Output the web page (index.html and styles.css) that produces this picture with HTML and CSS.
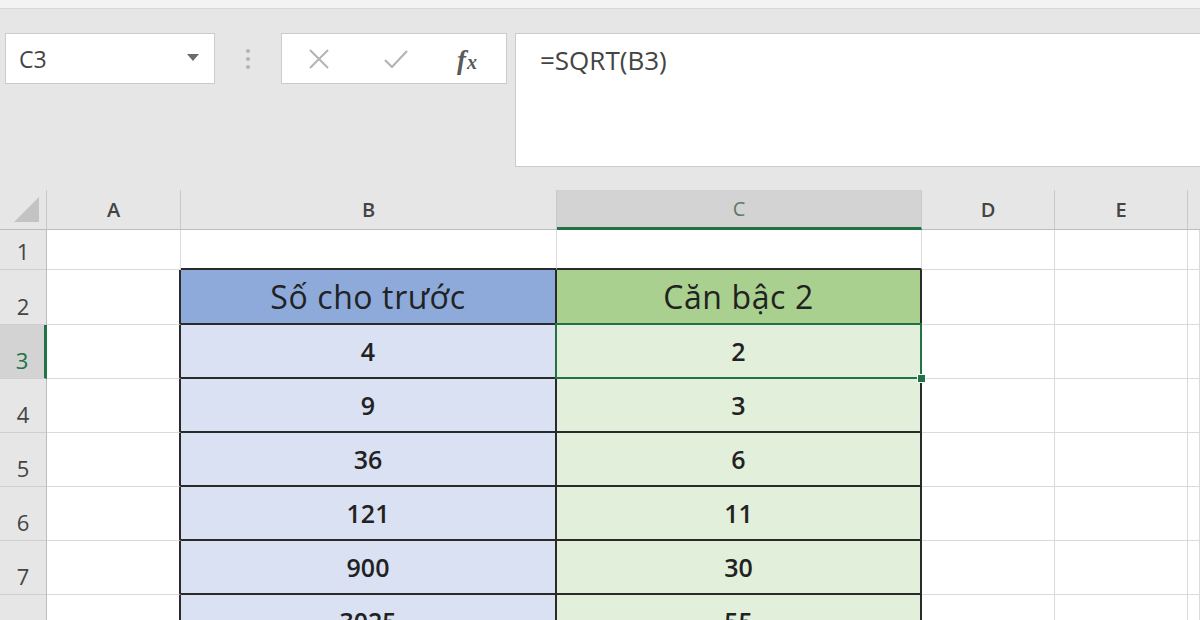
FILE: index.html
```html
<!DOCTYPE html>
<html>
    <head>
        <meta charset="UTF-8" />
        <link rel="stylesheet" href="styles.css">
    </head>
    <body>
        <div class="titlebar"></div>

        <div class="toolbar">
            <div class="namebox">
                <span>C3</span>
                <span class="arrow"></span>
            </div>
            <div class="dots"><span></span><span></span><span></span></div>
            <div class="fxbox">
                <svg class="ico-x" width="22" height="22" viewBox="0 0 22 22">
                    <path d="M2 2 L20 20 M20 2 L2 20" stroke="#b4b4b4" stroke-width="2" fill="none"/>
                </svg>
                <svg class="ico-ok" width="26" height="22" viewBox="0 0 26 22">
                    <path d="M2 12 L9 19 L24 3" stroke="#b4b4b4" stroke-width="2.2" fill="none"/>
                </svg>
                <span class="ico-fx"><span class="f">f</span>x</span>
            </div>
            <div class="formula">=SQRT(B3)</div>
        </div>

        <div class="sheet">
            <!-- header row -->
            <div class="ch corner"><span class="tri"></span></div>
            <div class="ch">A</div>
            <div class="ch">B</div>
            <div class="ch active">C</div>
            <div class="ch">D</div>
            <div class="ch">E</div>
            <div class="ch last"></div>

            <!-- row 1 -->
            <div class="rh">1</div>
            <div class="cell"></div>
            <div class="cell top-edge"></div>
            <div class="cell top-edge"></div>
            <div class="cell"></div>
            <div class="cell"></div>
            <div class="cell"></div>

            <!-- row 2 -->
            <div class="rh">2</div>
            <div class="cell left-edge"></div>
            <div class="cell tbl head-b">Số cho trước</div>
            <div class="cell tbl head-c">Căn bậc 2</div>
            <div class="cell"></div>
            <div class="cell"></div>
            <div class="cell"></div>

            <!-- row 3 -->
            <div class="rh active">3</div>
            <div class="cell left-edge"></div>
            <div class="cell tbl val-b">4</div>
            <div class="cell tbl val-c sel">2</div>
            <div class="cell"></div>
            <div class="cell"></div>
            <div class="cell"></div>

            <div class="rh">4</div>
            <div class="cell left-edge"></div>
            <div class="cell tbl val-b">9</div>
            <div class="cell tbl val-c">3</div>
            <div class="cell"></div>
            <div class="cell"></div>
            <div class="cell"></div>

            <div class="rh">5</div>
            <div class="cell left-edge"></div>
            <div class="cell tbl val-b">36</div>
            <div class="cell tbl val-c">6</div>
            <div class="cell"></div>
            <div class="cell"></div>
            <div class="cell"></div>

            <div class="rh">6</div>
            <div class="cell left-edge"></div>
            <div class="cell tbl val-b">121</div>
            <div class="cell tbl val-c">11</div>
            <div class="cell"></div>
            <div class="cell"></div>
            <div class="cell"></div>

            <div class="rh">7</div>
            <div class="cell left-edge"></div>
            <div class="cell tbl val-b">900</div>
            <div class="cell tbl val-c">30</div>
            <div class="cell"></div>
            <div class="cell"></div>
            <div class="cell"></div>

            <div class="rh">8</div>
            <div class="cell left-edge"></div>
            <div class="cell tbl val-b">3025</div>
            <div class="cell tbl val-c">55</div>
            <div class="cell"></div>
            <div class="cell"></div>
            <div class="cell"></div>
        </div>
    </body>
</html>
```

FILE: styles.css
```css
body {
    margin: 0;
    background: #fff;
    font-family: "Open Sans", "Noto Sans", "Liberation Sans", sans-serif;
    overflow: hidden;
}

.titlebar {
    height: 8px;
    background: #f3f3f3;
    border-bottom: 1px solid #d6d6d6;
}

.toolbar {
    height: 181px;
    box-sizing: border-box;
    background: #e6e6e6;
    display: flex;
    align-items: flex-start;
    padding: 24px 0 0 5px;
}

.namebox {
    width: 210px;
    height: 51px;
    box-sizing: border-box;
    background: #fff;
    border: 1px solid #cbcbcb;
    display: flex;
    align-items: center;
    justify-content: space-between;
    padding: 0 15px 0 13px;
    font-size: 23px;
    color: #444;
}

.arrow {
    width: 0;
    height: 0;
    border-left: 6px solid transparent;
    border-right: 6px solid transparent;
    border-top: 7px solid #6a6a6a;
    margin-top: -3px;
}

.dots {
    width: 66px;
    height: 51px;
    display: flex;
    flex-direction: column;
    align-items: center;
    justify-content: center;
    gap: 4px;
}

.dots span {
    width: 4px;
    height: 4px;
    border-radius: 50%;
    background: #b3b3b3;
}

.fxbox {
    width: 226px;
    height: 51px;
    box-sizing: border-box;
    background: #fff;
    border: 1px solid #cbcbcb;
    display: flex;
    align-items: center;
    padding: 0 0 0 26px;
}

.ico-x {
    margin-right: 53px;
}

.ico-ok {
    margin-right: 48px;
}

.ico-fx {
    font-family: "Liberation Serif", "DejaVu Serif", serif;
    font-style: italic;
    font-weight: bold;
    font-size: 20px;
    color: #5a5a5a;
    margin-top: 4px;
}

.ico-fx .f {
    font-size: 27px;
    margin-right: 1px;
}

.formula {
    flex: 1;
    margin-left: 8px;
    height: 134px;
    box-sizing: border-box;
    background: #fff;
    border: 1px solid #cbcbcb;
    border-right: none;
    padding: 8px 24px;
    font-size: 26px;
    color: #444;
}

.sheet {
    display: grid;
    grid-template-columns: 47px 134px 376px 365px 133px 133px 1fr;
    grid-template-rows: 40px 40px 55px repeat(6, 54px);
}

.ch {
    background: #e6e6e6;
    border-right: 1px solid #c9c9c9;
    border-bottom: 1px solid #bcbcbc;
    box-sizing: border-box;
    display: flex;
    align-items: center;
    justify-content: center;
    font-size: 20px;
    font-weight: 600;
    color: #444;
}

.ch.active {
    background: #d3d3d3;
    color: #5b7b68;
    font-weight: normal;
    border-bottom: 3px solid #217346;
}

.ch.last {
    border-right: none;
}

.corner {
    align-items: flex-end;
    justify-content: flex-end;
    padding: 0 7px 7px 0;
}

.tri {
    width: 0;
    height: 0;
    border-left: 25px solid transparent;
    border-bottom: 25px solid #c3c3c3;
}

.rh {
    background: #e6e6e6;
    border-right: 1px solid #bcbcbc;
    border-bottom: 1px solid #cfcfcf;
    box-sizing: border-box;
    display: flex;
    align-items: flex-end;
    justify-content: center;
    padding-bottom: 3px;
    font-size: 22px;
    color: #444;
}

.rh.active {
    background: #d3d3d3;
    color: #217346;
    border-right: 3px solid #217346;
}

.cell {
    border-right: 1px solid #dadada;
    border-bottom: 1px solid #dadada;
    box-sizing: border-box;
    display: flex;
    align-items: center;
    justify-content: center;
    color: #222;
}

.top-edge {
    border-bottom: 2px solid #2a2a2a;
}

.left-edge {
    border-right: 2px solid #2a2a2a;
}

.tbl {
    border-right: 2px solid #2a2a2a;
    border-bottom: 2px solid #2a2a2a;
}

.head-b {
    background: #8eaadb;
    font-size: 32px;
    letter-spacing: 0.6px;
}

.head-c {
    background: #a9d08e;
    font-size: 32px;
    letter-spacing: 0.6px;
}

.val-b {
    background: #d9e1f2;
    font-size: 25px;
    font-weight: 600;
}

.val-c {
    background: #e2efda;
    font-size: 25px;
    font-weight: 600;
}

.sel {
    position: relative;
}

.sel::after {
    content: "";
    position: absolute;
    left: -2px;
    top: -2px;
    right: -2px;
    bottom: -2px;
    border: 2px solid #217346;
}

.sel::before {
    content: "";
    position: absolute;
    right: -6px;
    bottom: -6px;
    width: 7px;
    height: 7px;
    background: #217346;
    border: 1px solid #fff;
    z-index: 2;
}
```
